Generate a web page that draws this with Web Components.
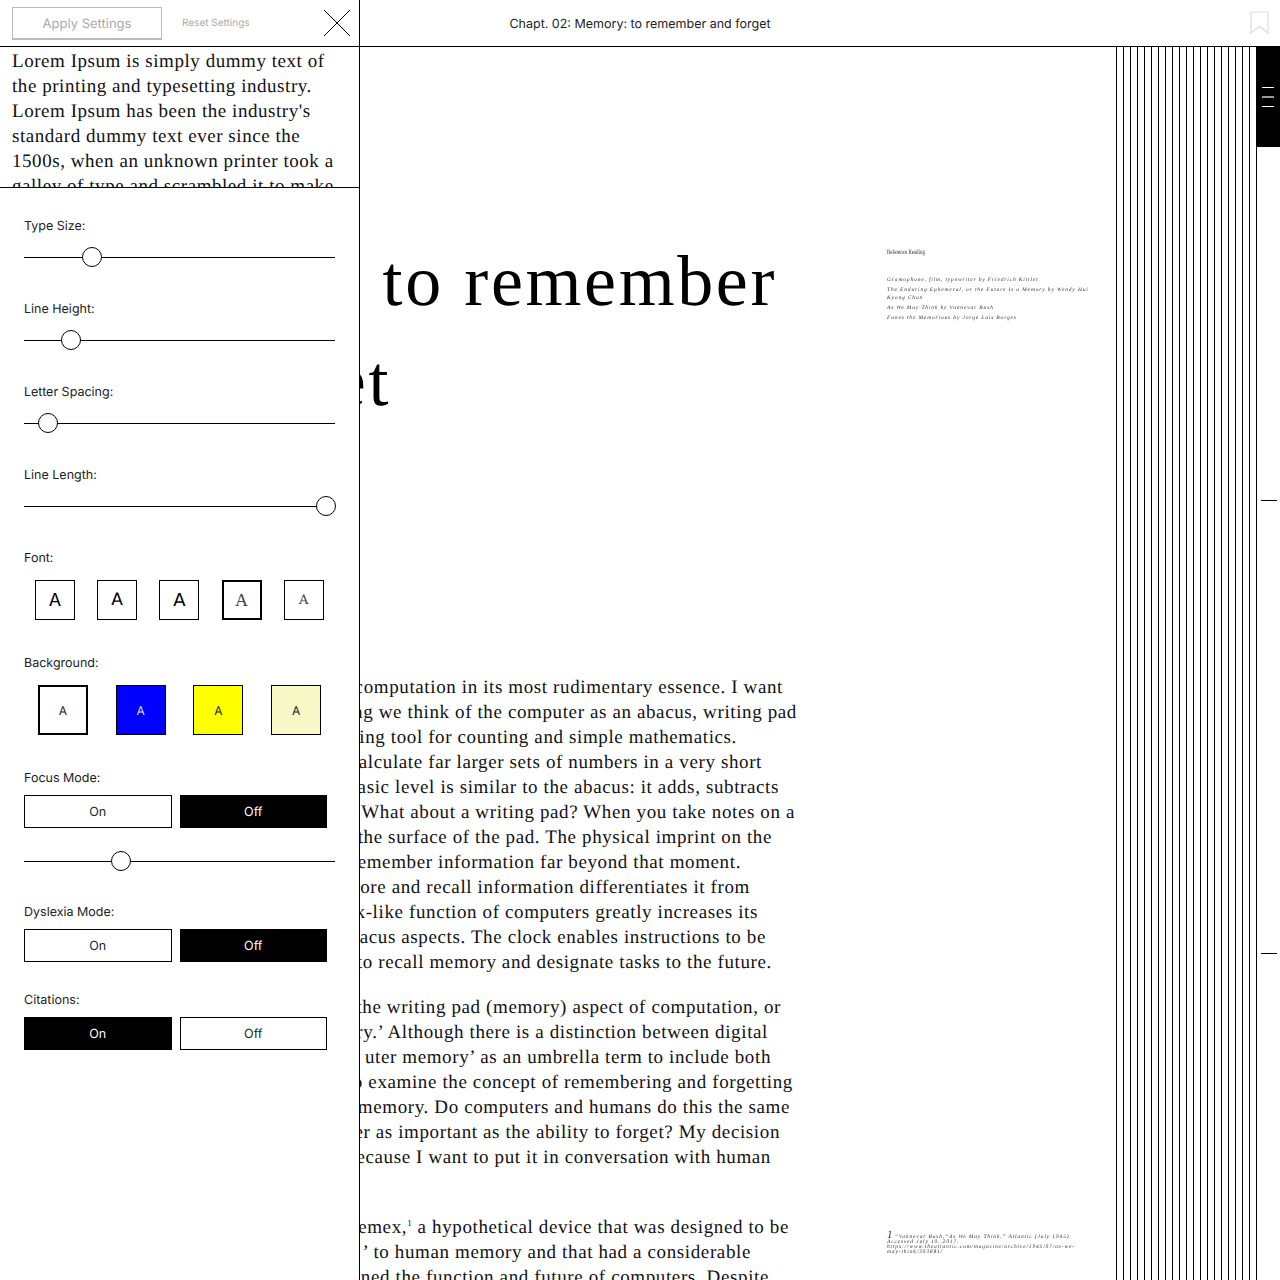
<!doctype html>
<html lang="en">
<head>
<meta charset="utf-8">
<title>Memory: to remember and forget</title>
<style>
  html, body { margin: 0; background: #fff; }
  body { height: 1280px; overflow: hidden; position: relative; font-family: Inter, "Liberation Sans", sans-serif; color: #000; text-rendering: geometricPrecision; }
</style>
</head>
<body>
<reader-bar>Chapt. 02: Memory: to remember and forget</reader-bar>

<reader-main>
  <reader-article>
    <big-line end="777">to remember</big-line>
    <big-line end="391">et</big-line>
    <text-para style="margin-top:244px">
      <text-line end="783">computation in its most rudimentary essence. I want</text-line>
      <text-line end="797">ng we think of the computer as an abacus, writing pad</text-line>
      <text-line end="737">ting tool for counting and simple mathematics.</text-line>
      <text-line end="762">alculate far larger sets of numbers in a very short</text-line>
      <text-line end="779">basic level is similar to the abacus: it adds, subtracts</text-line>
      <text-line end="795">What about a writing pad? When you take notes on a</text-line>
      <text-line end="772">the surface of the pad. The physical imprint on the</text-line>
      <text-line end="741">emember information far beyond that moment.</text-line>
      <text-line end="750">tore and recall information differentiates it from</text-line>
      <text-line end="758">ck-like function of computers greatly increases its</text-line>
      <text-line end="766">bacus aspects. The clock enables instructions to be</text-line>
      <text-line end="772">to recall memory and designate tasks to the future.</text-line>
    </text-para>
    <text-para>
      <text-line end="781">the writing pad (memory) aspect of computation, or</text-line>
      <text-line end="768">ry.’ Although there is a distinction between digital</text-line>
      <text-line end="771">uter memory’ as an umbrella term to include both</text-line>
      <text-line end="793">o examine the concept of remembering and forgetting</text-line>
      <text-line end="790">memory. Do computers and humans do this the same</text-line>
      <text-line end="780">er as important as the ability to forget? My decision</text-line>
      <text-line end="771">ecause I want to put it in conversation with human</text-line>
      <text-line end="300">&nbsp;</text-line>
    </text-para>
    <text-para>
      <text-line end="789">emex,<sup>1</sup> a hypothetical device that was designed to be</text-line>
      <text-line end="751">’ to human memory and that had a considerable</text-line>
      <text-line end="769">ned the function and future of computers. Despite</text-line>
    </text-para>
  </reader-article>
  <side-notes>
    <span slot="title">Reference Reading</span>
    <span>Gramophone, film, typewriter by Friedrich Kittler</span>
    <span>The Enduring Ephemeral, or the Future Is a Memory by Wendy Hui Kyong Chun</span>
    <span>As We May Think by Vannevar Bush</span>
    <span>Funes the Memorious by Jorge Luis Borges</span>
    <span slot="foot">“Vannevar Bush,“As We May Think,” Atlantic (July 1945). Accessed July 10, 2017. https://www.theatlantic.com/magazine/archive/1945/07/as-we-may-think/303881/</span>
  </side-notes>
  <chapter-stripes></chapter-stripes>
  <chapter-rail></chapter-rail>
</reader-main>

<settings-panel>
  <span slot="preview">Lorem Ipsum is simply dummy text of the printing and typesetting industry. Lorem Ipsum has been the industry's standard dummy text ever since the 1500s, when an unknown printer took a galley of type and scrambled it to make</span>
  <setting-slider label="Type Size:" at="68"></setting-slider>
  <setting-slider label="Line Height:" at="47"></setting-slider>
  <setting-slider label="Letter Spacing:" at="24"></setting-slider>
  <setting-slider label="Line Length:" at="302"></setting-slider>
  <font-choice></font-choice>
  <background-choice></background-choice>
  <setting-toggle label="Focus Mode:" active="off" gap="34"></setting-toggle>
  <setting-slider at="97" bare style="margin-top:23px"></setting-slider>
  <setting-toggle label="Dyslexia Mode:" active="off" gap="32"></setting-toggle>
  <setting-toggle label="Citations:" active="on" gap="29"></setting-toggle>
</settings-panel>

<script>
const SERIF = '"Liberation Serif", "DejaVu Serif", serif';

class ReaderBar extends HTMLElement {
  constructor() {
    super();
    this.attachShadow({ mode: 'open' }).innerHTML = `
      <style>
        :host { display: flex; height: 44px; padding-top: 2px; border-bottom: 1px solid #000; align-items: center; justify-content: center; position: relative; font-size: 12.5px; color: #222; }
        svg { position: absolute; right: 11px; top: 11px; }
      </style>
      <slot></slot>
      <svg width="19" height="23" viewBox="0 0 19 23" fill="none" stroke="#ddd" stroke-width="1.2"><path d="M1 1H18V22L9.5 15.5L1 22Z"/></svg>`;
  }
}

class ReaderMain extends HTMLElement {
  constructor() {
    super();
    this.attachShadow({ mode: 'open' }).innerHTML = `
      <style>:host { display: flex; height: 1233px; overflow: hidden; }</style>
      <slot></slot>`;
  }
}

class ReaderArticle extends HTMLElement {
  constructor() {
    super();
    this.attachShadow({ mode: 'open' }).innerHTML = `
      <style>
        :host { display: block; width: 887px; padding-top: 184px; flex: none; font-family: ${SERIF}; }
      </style>
      <slot></slot>`;
  }
}

// one typeset line, placed by where its right edge falls
class TextLine extends HTMLElement {
  constructor() {
    super();
    this.attachShadow({ mode: 'open' }).innerHTML = `
      <style>
        :host { display: block; white-space: nowrap; text-align: right; font-size: 19px; line-height: 25px; letter-spacing: .62px; color: #111; }
        ::slotted(sup) { font-size: 9px; line-height: 0; }
      </style>
      <slot></slot>`;
  }
  connectedCallback() {
    this.style.width = this.getAttribute('end') + 'px';
  }
}

class BigLine extends HTMLElement {
  constructor() {
    super();
    this.attachShadow({ mode: 'open' }).innerHTML = `
      <style>
        :host { display: block; white-space: nowrap; text-align: right; font-size: 72px; line-height: 100px; letter-spacing: 2.6px; }
      </style>
      <slot></slot>`;
  }
  connectedCallback() {
    this.style.width = this.getAttribute('end') + 'px';
  }
}

class TextPara extends HTMLElement {
  constructor() {
    super();
    this.attachShadow({ mode: 'open' }).innerHTML = `
      <style>:host { display: block; margin-top: 20px; }</style>
      <slot></slot>`;
  }
}

class SideNotes extends HTMLElement {
  constructor() {
    super();
    this.attachShadow({ mode: 'open' }).innerHTML = `
      <style>
        :host { display: block; width: 229px; flex: none; box-sizing: border-box; padding: 201px 26px 0 0; font-family: ${SERIF}; color: #333; will-change: transform; }
        .title { font-size: 7px; line-height: 8px; margin-bottom: 21px; transform: scaleX(.71); transform-origin: left; white-space: nowrap; }
        .list { display: flex; flex-direction: column; gap: 2.8px; font-size: 5.5px; line-height: 7.5px; font-style: italic; letter-spacing: .85px; }
        ::slotted(span) { display: block; }
        ::slotted([slot="foot"]) { display: inline; }
        .foot { margin-top: 912px; width: 196px; display: block; font-size: 5.5px; line-height: 5px; font-style: italic; letter-spacing: .85px; }
        .foot b { font-weight: normal; font-size: 11px; line-height: 0; letter-spacing: 0; }
      </style>
      <div class="title"><slot name="title"></slot></div>
      <div class="list"><slot></slot></div>
      <div class="foot"><b>1</b> <slot name="foot"></slot></div>`;
  }
}

class ChapterStripes extends HTMLElement {
  constructor() {
    super();
    this.attachShadow({ mode: 'open' }).innerHTML = `
      <style>
        :host { display: block; width: 140px; flex: none; background: repeating-linear-gradient(90deg, #000 0 1px, #fff 1px 7px); }
      </style>`;
  }
}

class ChapterRail extends HTMLElement {
  constructor() {
    super();
    this.attachShadow({ mode: 'open' }).innerHTML = `
      <style>
        :host { display: block; width: 24px; flex: none; position: relative; border-left: 1px solid #000; box-sizing: border-box; }
        .tab { height: 100px; background: #000; display: flex; flex-direction: column; align-items: center; padding-top: 40px; box-sizing: border-box; gap: 8px; margin-left: -1px; }
        .tab i { display: block; width: 12px; height: 1px; background: #fff; }
        .tab i.now { height: 2px; background: #999; }
        .tick { position: absolute; left: 4px; width: 16px; height: 1px; background: #000; }
      </style>
      <div class="tab"><i></i><i class="now"></i><i></i></div>
      <div class="tick" style="top:453px"></div>
      <div class="tick" style="top:906px"></div>`;
  }
}

class SettingsPanel extends HTMLElement {
  constructor() {
    super();
    this.attachShadow({ mode: 'open' }).innerHTML = `
      <style>
        :host { display: block; position: absolute; left: 0; top: 0; width: 360px; height: 1280px; box-sizing: border-box; background: #fff; border-right: 1px solid #000; }
        header { height: 46px; border-bottom: 1px solid #000; display: flex; align-items: center; box-sizing: content-box; position: relative; }
        .apply { margin-left: 12px; width: 150px; height: 33px; box-sizing: border-box; border: 1px solid #bbb; border-width: 1px 1px 2px 1px; background: #fff; color: #aaa; font: 13px Inter, sans-serif; text-rendering: geometricPrecision; padding: 1px 0 0; display: block; margin-top: 1px; }
        .reset { margin-left: 20px; font-size: 10px; color: #aaa; }
        svg { position: absolute; left: 324px; top: 10px; }
        .preview { overflow: hidden; border-bottom: 1px solid #000; padding: 2px 12px 0; font-family: ${SERIF}; font-size: 19px; line-height: 25px; letter-spacing: .55px; color: #111; box-sizing: border-box; height: 141px; }
        .controls { padding: 29px 24px 0; }
      </style>
      <header>
        <button class="apply">Apply Settings</button>
        <span class="reset">Reset Settings</span>
        <svg width="26" height="26" viewBox="0 0 26 26" stroke="#000" fill="none"><path d="M0 0L26 26M26 0L0 26"/></svg>
      </header>
      <div class="preview"><slot name="preview"></slot></div>
      <div class="controls"><slot></slot></div>`;
  }
}

class SettingSlider extends HTMLElement {
  constructor() {
    super();
    this.attachShadow({ mode: 'open' });
  }
  connectedCallback() {
    const label = this.getAttribute('label');
    const at = this.getAttribute('at');
    this.shadowRoot.innerHTML = `
      <style>
        :host { display: block; font-size: 12.5px; color: #222; }
        :host(:not([bare])) { margin-bottom: 33px; }
        .label { height: 16px; line-height: 19px; margin-bottom: 14px; }
        .track { height: 20px; width: 311px; position: relative; background: linear-gradient(#000, #000) 0 50% / 100% 1px no-repeat; }
        .thumb { position: absolute; top: 0; width: 18px; height: 18px; margin-left: -10px; border: 1px solid #000; border-radius: 50%; background: #fff; }
      </style>
      ${label ? `<div class="label">${label}</div>` : ''}
      <div class="track"><div class="thumb" style="left:${at}px"></div></div>`;
  }
}

class FontChoice extends HTMLElement {
  constructor() {
    super();
    const fonts = [
      ['Inter, sans-serif', 18],
      ['"DejaVu Sans", sans-serif', 17],
      ['"DejaVu Sans", sans-serif', 18],
      ['"Liberation Serif", serif', 18],
      ['"DejaVu Serif", serif', 13],
    ];
    this.attachShadow({ mode: 'open' }).innerHTML = `
      <style>
        :host { display: block; font-size: 12.5px; color: #222; }
        .label { height: 16px; line-height: 19px; margin-bottom: 15px; }
        .row { display: flex; padding-left: 11px; gap: 22.2px; }
        .box { width: 40px; height: 40px; flex: none; box-sizing: border-box; border: 1px solid #000; display: flex; align-items: center; justify-content: center; color: #000; }
        .box.sel { border-width: 2px; }
      </style>
      <div class="label">Font:</div>
      <div class="row">${fonts.map((f, i) => `<div class="box${i === 3 ? ' sel' : ''}" style="font-family:${f[0].replace(/"/g, "'")};font-size:${f[1]}px;${i === 1 ? 'font-weight:500;' : ''}${i === 3 || i === 4 ? 'color:#444;' : ''}">A</div>`).join('')}</div>`;
  }
}

class BackgroundChoice extends HTMLElement {
  constructor() {
    super();
    const swatches = [['#fff', '#222', 1], ['#0000ff', '#dde', 0], ['#ffff00', '#222', 0], ['#f9f9c8', '#222', 0]];
    this.attachShadow({ mode: 'open' }).innerHTML = `
      <style>
        :host { display: block; font-size: 12.5px; color: #222; margin-top: 34px; }
        .label { height: 16px; line-height: 19px; margin-bottom: 15px; }
        .row { display: flex; gap: 27.7px; padding-left: 14px; }
        .box { width: 50px; height: 50px; flex: none; box-sizing: border-box; border: 1px solid #000; display: flex; align-items: center; justify-content: center; font-size: 12px; }
        .box.sel { border-width: 2px; }
      </style>
      <div class="label">Background:</div>
      <div class="row">${swatches.map(s => `<div class="box${s[2] ? ' sel' : ''}" style="background:${s[0]};color:${s[1]}">A</div>`).join('')}</div>`;
  }
}

class SettingToggle extends HTMLElement {
  constructor() {
    super();
    this.attachShadow({ mode: 'open' });
  }
  connectedCallback() {
    const on = this.getAttribute('active') === 'on';
    this.shadowRoot.innerHTML = `
      <style>
        :host { display: block; font-size: 12.5px; color: #222; margin-top: ${this.getAttribute('gap')}px; }
        .label { height: 16px; line-height: 19px; margin-bottom: 10px; }
        .row { display: flex; gap: 8px; width: 303px; }
        .opt { flex: 1; height: 33px; box-sizing: border-box; border: 1px solid #000; padding-top: 1px; display: flex; align-items: center; justify-content: center; font-size: 12.5px; }
        .opt.sel { background: #000; color: #fff; }
      </style>
      <div class="label">${this.getAttribute('label')}</div>
      <div class="row"><div class="opt${on ? ' sel' : ''}">On</div><div class="opt${on ? '' : ' sel'}">Off</div></div>`;
  }
}

customElements.define('reader-bar', ReaderBar);
customElements.define('reader-main', ReaderMain);
customElements.define('reader-article', ReaderArticle);
customElements.define('text-line', TextLine);
customElements.define('big-line', BigLine);
customElements.define('text-para', TextPara);
customElements.define('side-notes', SideNotes);
customElements.define('chapter-stripes', ChapterStripes);
customElements.define('chapter-rail', ChapterRail);
customElements.define('settings-panel', SettingsPanel);
customElements.define('setting-slider', SettingSlider);
customElements.define('font-choice', FontChoice);
customElements.define('background-choice', BackgroundChoice);
customElements.define('setting-toggle', SettingToggle);
</script>
</body>
</html>
